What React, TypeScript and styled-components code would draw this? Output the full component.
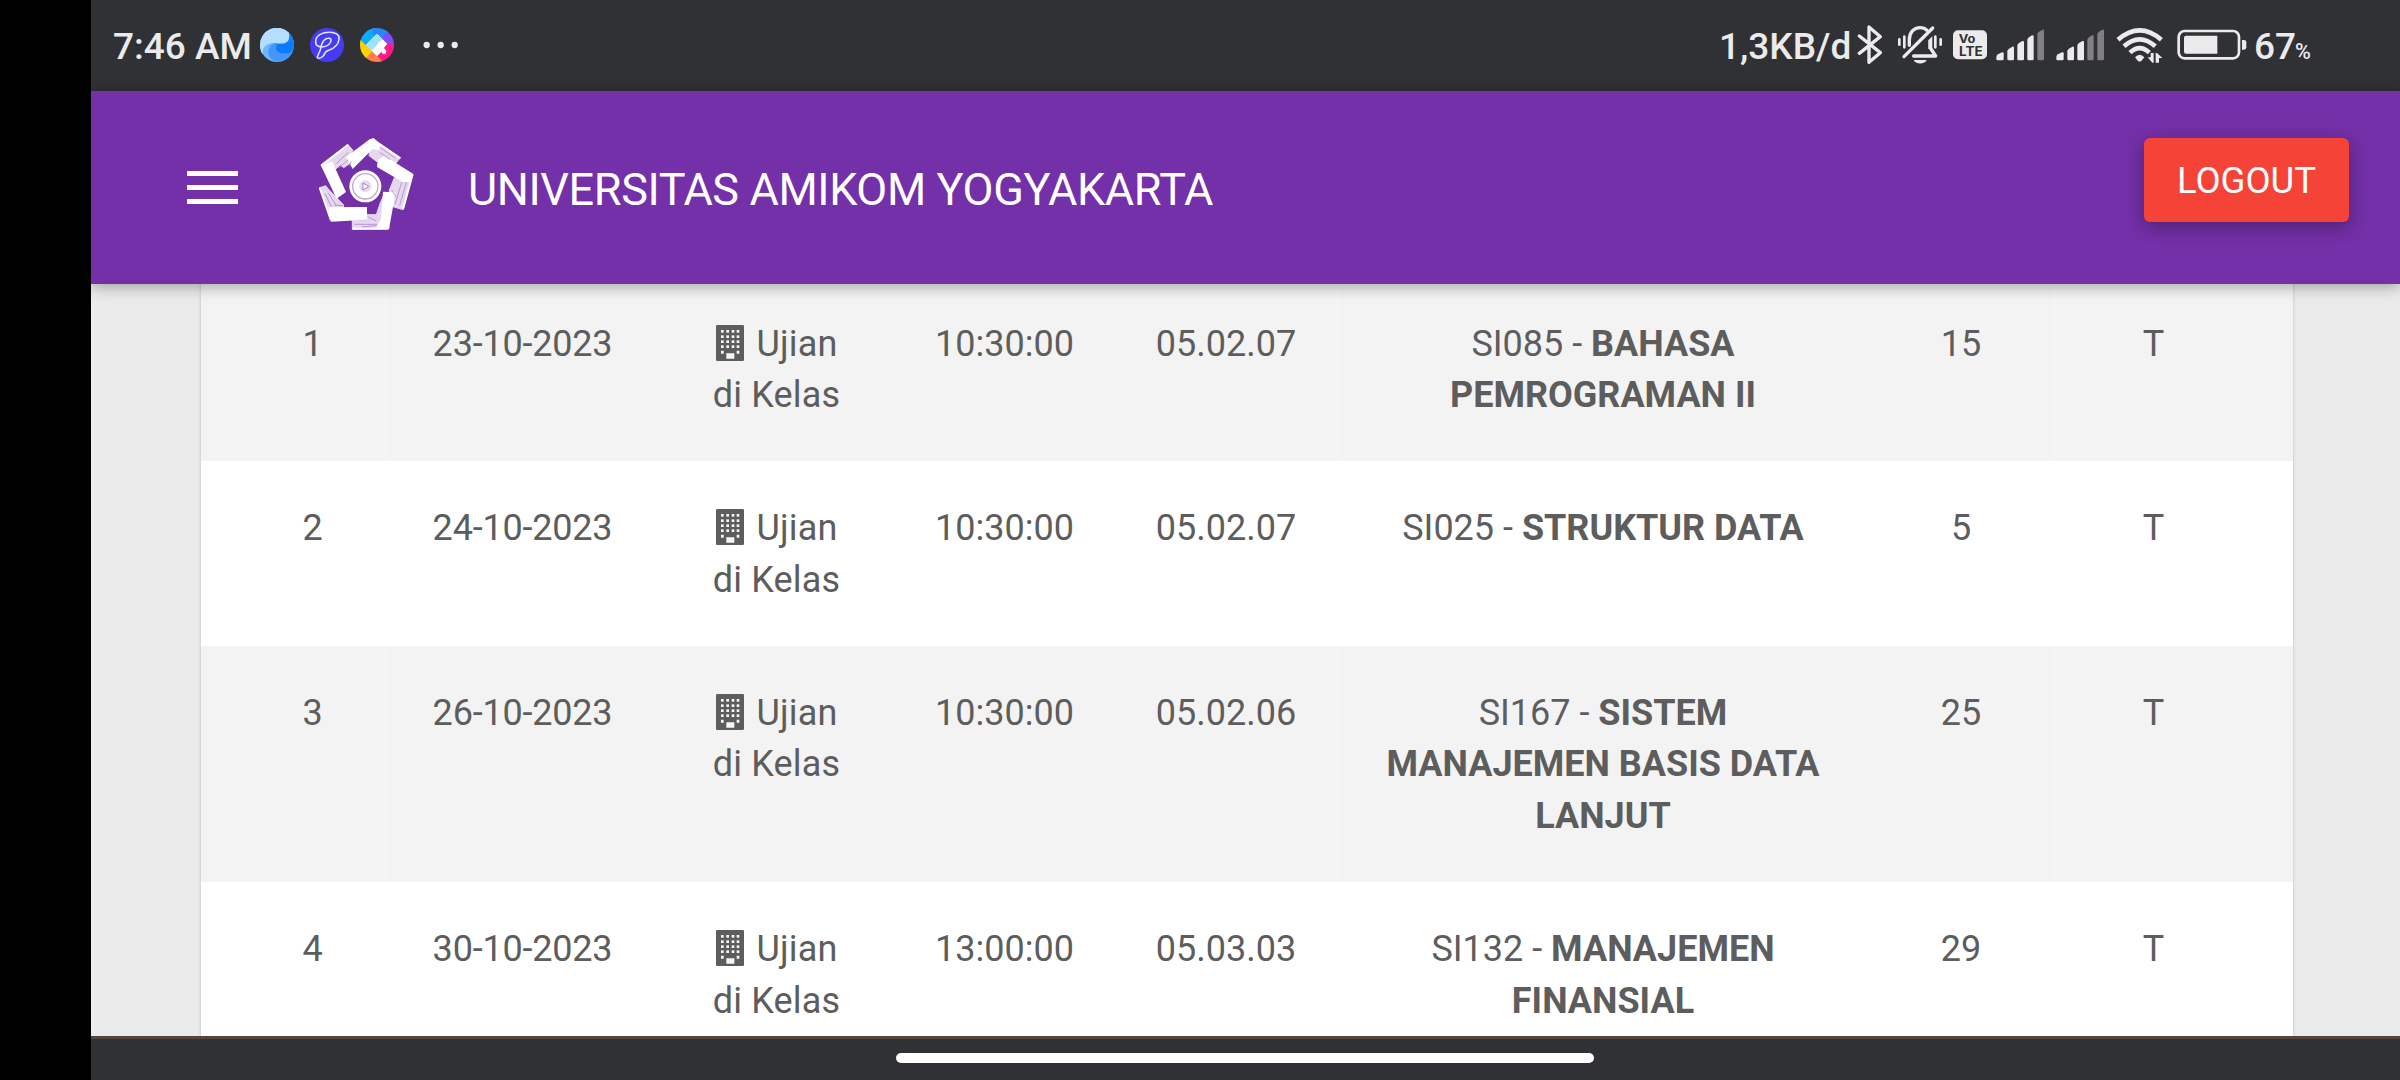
import React from "react";
import styled, { createGlobalStyle } from "styled-components";

const ink = "#ebebeb";
const muted = "#808082";
const purple = "#7430a8";

const GlobalStyle = createGlobalStyle`
  * { box-sizing: border-box; }
  body { margin: 0; background: #000; font-family: Roboto, "Liberation Sans", sans-serif; }
`;

const Screen = styled.div`
  display: flex;
  flex-direction: column;
  width: 2400px;
  height: 1080px;
  padding-left: 91px;
  background: #000;
  overflow: hidden;
`;

const StatusBar = styled.div`
  flex: none;
  display: flex;
  justify-content: space-between;
  height: 91px;
  padding: 0 88px 0 22px;
  background: #303135;
  color: ${ink};
`;

const StatusGroup = styled.div`
  display: flex;
  height: 90px;
  align-items: center;
`;

const StatusText = styled.span<{ $w: number; $ml?: number }>`
  width: ${(p) => p.$w}px;
  margin-left: ${(p) => p.$ml ?? 0}px;
  font-size: 37px;
  font-weight: 500;
  line-height: 44px;
  white-space: nowrap;
  margin-top: 3px;
`;

const Percent = styled.span`
  font-size: 21.5px;
  font-weight: 500;
  line-height: 24px;
  width: 16px;
  margin: 14px 1px 0 -1px;
`;

const Glyph = styled.svg<{ $ml?: number }>`
  flex: none;
  display: block;
  margin-left: ${(p) => p.$ml ?? 0}px;
`;

const AppBar = styled.header`
  flex: none;
  position: relative;
  z-index: 1;
  display: flex;
  align-items: flex-start;
  height: 193px;
  padding: 47px 51px 0 96px;
  background: ${purple};
  box-shadow: 0 3px 14px rgba(0, 0, 0, 0.32);
  color: #fff;
`;

const MenuButton = styled.div`
  display: flex;
  flex-direction: column;
  justify-content: space-between;
  width: 51px;
  height: 33px;
  margin-top: 33px;
`;

const MenuLine = styled.span`
  height: 5.4px;
  background: #fff;
`;

const Title = styled.h1`
  margin: 26px 0 0 54px;
  font-size: 45px;
  font-weight: 400;
  line-height: 52px;
  letter-spacing: -0.39px;
  white-space: nowrap;
`;

const LogoutButton = styled.button`
  margin-left: auto;
  width: 205px;
  height: 84px;
  padding: 0;
  border: 0;
  border-radius: 6px;
  background: #f54437;
  color: #fff;
  font-family: inherit;
  font-size: 36.5px;
  line-height: 85px;
  text-align: center;
  box-shadow: 0 6px 16px rgba(0, 0, 0, 0.2), 0 3px 24px rgba(0, 0, 0, 0.14);
`;

const Content = styled.main`
  flex: none;
  height: 752px;
  padding: 0 107px 0 110px;
  overflow: hidden;
  background: #ebebeb;
`;

const Card = styled.section`
  margin-top: -8px;
  height: 800px;
  background: #fff;
  box-shadow: 0 0 3px rgba(0, 0, 0, 0.2);
`;

const Row = styled.div<{ $shaded: boolean }>`
  display: grid;
  grid-template-columns: 185px 273px 235px 221px 223px 530px 187px 1fr;
  color: #5d5d5d;
  font-size: 36px;
  line-height: 51.3px;
  background: ${(p) => (p.$shaded ? "#f3f3f3" : "#fff")};
`;

const Cell = styled.div<{ $rule?: boolean; $pl?: number; $pr?: number; $ls?: number }>`
  padding: 42.6px ${(p) => p.$pr ?? 0}px 39.6px ${(p) => p.$pl ?? 0}px;
  border-right: ${(p) => (p.$rule ? "1px solid rgba(255, 255, 255, 0.4)" : "0")};
  letter-spacing: ${(p) => p.$ls ?? 0}px;
  text-align: center;
  white-space: nowrap;
`;

const Course = styled.strong`
  font-weight: 700;
`;

const Line = styled.div`
  display: flex;
  justify-content: center;
  gap: 11px;
`;

const Building = styled.svg`
  width: 30px;
  height: 38px;
  margin-top: 5px;
`;

const NavBar = styled.footer`
  flex: none;
  display: flex;
  justify-content: center;
  height: 44px;
  padding: 14px 1px 0 0;
  border-top: 3px solid #54463f;
  background: #303135;
`;

const HomePill = styled.div`
  width: 698px;
  height: 10px;
  border-radius: 5px;
  background: #fff;
`;

const BrowserIcon = () => (
  <Glyph width="34" height="34" viewBox="540 84 102 102">
    <circle cx="591" cy="135" r="51" fill="#6fb6ff" />
    <path d="M627 99a51 51 0 0 1-29 86c-22 1-38-19-32-36 5-16 19-22 25-19-3 12 0 29 14 29 17 0 29-12 29-31z" fill="#4496f8" />
    <path d="M627 98c10 10 15 22 15 37 0 14-7 24-18 25-17 2-36-1-36-17 0-7 3-12 3-12 12 2 31 1 36-14z" fill="#0b7cff" />
    <path d="M540 135a51 51 0 0 1 87-37c3 20-3 31-20 32-20 0-42-5-55 13-5 8-5 15-4 21-5-8-8-18-8-29z" fill="#b3deff" />
  </Glyph>
);

const ScribbleIcon = () => (
  <Glyph width="34" height="34" viewBox="690 84 102 102" $ml={16}>
    <circle cx="741" cy="135" r="51" fill="#463cf4" />
    <path
      d="M731 140c10 0 21-9 22-18 1-8-9-9-16-5-9 5-13 17-15 29-3 13-12 24-10 27 3 4 15 0 20-8 2-8 5-11 14-14 14-5 29-17 31-33 2-15-12-21-28-21-24 0-41 10-42 27-1 14 10 18 24 16"
      fill="none"
      stroke="#e8e4ff"
      strokeWidth="4.5"
      strokeLinecap="round"
    />
  </Glyph>
);

const PaintIcon = () => (
  <Glyph width="34" height="34" viewBox="840 84 102 102" $ml={16}>
    <defs>
      <clipPath id="paintClip">
        <circle cx="891" cy="135" r="51" />
      </clipPath>
    </defs>
    <g clipPath="url(#paintClip)">
      <path d="M840 84h51l-51 56z" fill="#10b2f8" />
      <path d="M840 120l51-50v32l-33 34z" fill="#08acfb" />
      <path d="M876 84h50v10l-28 30-20-22z" fill="#2a86fb" />
      <path d="M942 80v66l-16-5-24-24 32-34z" fill="#7c4dfb" />
      <path d="M942 135v51h-30l-24-20 38-38z" fill="#ff1b86" />
      <path d="M855 186l-5-8 26-26 34 34z" fill="#ff7e52" />
      <path d="M840 118l36 36-20 22-16-20z" fill="#ffcf0a" />
      <path d="M891 101l34 34-34 34-34-34z" fill="#fff" />
      <path d="M891 101l17 17-34 34-17-17z" fill="#9fe2ff" />
      <path d="M903 152l22-24v26l-8 18-14-4z" fill="#ff1b86" />
      <path d="M896 126l15-5 5 16-4 7 7 9-3 9-8-1-6-9-11 4-6-10z" fill="#fff" />
    </g>
  </Glyph>
);

const DotsIcon = () => (
  <Glyph width="36" height="10" viewBox="1030 120 108 30" $ml={29}>
    {[1041, 1083, 1125].map((x) => (
      <circle key={x} cx={x} cy="135" r="9.5" fill={ink} />
    ))}
  </Glyph>
);

const BluetoothIcon = () => (
  <Glyph width="26" height="40" viewBox="471 75 78 120">
    <path
      d="M478 108l63 50-34 29V81l34 29-63 50"
      fill="none"
      stroke={ink}
      strokeWidth="10"
      strokeLinecap="round"
      strokeLinejoin="round"
    />
  </Glyph>
);

const BellIcon = () => (
  <Glyph width="46" height="40" viewBox="591 78 138 120" $ml={14}>
    <g fill="none" stroke={ink} strokeLinecap="round">
      <path d="M628 139v-17c0-22 14-36 32-36 9 0 16 3 21 8" strokeWidth="10" />
      <path d="M612 173l86-86" strokeWidth="10" />
      <path d="M598 121v16M613 113v32M706 113v32M722 121v16" strokeWidth="8" />
      <path d="M641 171h66l-16-24v-20" strokeWidth="10" strokeLinejoin="round" />
    </g>
    <path d="M697 112v38h-12v-26z" fill={ink} />
    <path d="M641 183h39c-4 14-35 14-39 0z" fill={ink} />
  </Glyph>
);

const VolteIcon = () => (
  <Glyph width="34" height="30" viewBox="759 92 102 90" $ml={10}>
    <rect x="759" y="93" width="102" height="87" rx="15" fill={ink} />
    <g fill="#303135" fontFamily="Inter, sans-serif" fontWeight="700">
      <text x="776" y="132" fontSize="35" textLength="50" lengthAdjust="spacingAndGlyphs">
        Vo
      </text>
      <text x="777" y="169" fontSize="38" textLength="71" lengthAdjust="spacingAndGlyphs">
        LTE
      </text>
    </g>
  </Glyph>
);

const SignalIcon = ({ level, ml }: { level: number; ml: number }) => (
  <Glyph width="48" height="32" viewBox="48 89 144 96" $ml={ml}>
    {[0, 1, 2, 3, 4].map((i) => {
      const x = [49, 82, 112, 142, 172][i];
      const right = [71, 102, 132, 161, 192][i];
      const top = 158 - i * 17;
      return (
        <path
          key={i}
          d={`M${x + 4} 183Q${x} 183 ${x} 179V${top + 15}Q${x} ${top + 10} ${x + 5} ${top + 7}L${right - 5} ${top + 1}Q${right} ${top} ${right} ${top + 4}V179Q${right} 183 ${right - 4} 183Z`}
          fill={i < level ? ink : muted}
        />
      );
    })}
  </Glyph>
);

const WifiIcon = () => (
  <Glyph width="48" height="38" viewBox="408 80 144 114" $ml={12}>
    <g fill="none" stroke={ink} strokeWidth="14">
      <path d="M414 121q65-56 130 0" />
      <path d="M432 141q47-42 94 0" />
      <path d="M450 160q29-27 58 0" />
    </g>
    <path d="M465 174q14-16 28 0l-9 11q-5 3-10 0z" fill={ink} />
    <path d="M503 174h9v-13h9v29h-4zM527 190v-29h4l16 15h-10v14z" fill={ink} />
  </Glyph>
);

const BatteryIcon = () => (
  <Glyph width="70" height="32" viewBox="593 88 210 96" $ml={13}>
    <rect x="598" y="94" width="181" height="82" rx="18" fill="none" stroke={ink} strokeWidth="8" />
    <path d="M620 108h94v54h-94q-6 0-6-6v-42q0-6 6-6z" fill={ink} />
    <path d="M788 121h6q7 0 7 7v15q0 7-7 7h-6z" fill={ink} />
  </Glyph>
);

const CampusLogo = () => (
  <Glyph width="96" height="94" viewBox="19 17 288 282" $ml={80}>
    <g fill="#e4d7ee" stroke="#e4d7ee" strokeWidth="3" strokeLinejoin="round">
      <path d="M182 20l84 56-16 20-34-22-20 14-24-18 8-40z" />
      <path d="M30 100l80-62 14 16-14 22 4 18-18 12-10-8-16 14 14 40z" />
      <path d="M24 166l18-6 8 10 46 48-2 12-36 6 2 28z" />
      <path d="M122 290v-25h42v-18h30l12-36 14-30 12 108z" />
      <path d="M302 128l-28 104-34-10 8-28-16-18 16-40z" />
    </g>
    <g fill="#fff">
      <path d="M103 74l72-54 12-2 20 20-6 16-18-4-60 60z" />
      <path d="M28 100l33-13 42 92-28 20z" />
      <path d="M50 224h116v38l-108 6z" />
      <path d="M214 178l38 2-20 110-38-6 14-24z" />
      <path d="M198 84l20-14 86 54-6 26-26-2-76-44z" />
    </g>
    <g fill="none" stroke="#fff" strokeWidth="6" strokeLinejoin="round">
      <path d="M182 20l84 58M28 100l82-63M24 166l34 98M122 289h108M303 126l-29 105" />
    </g>
    <g fill="none" stroke="#b08ad0" strokeWidth="2.5">
      <path d="M206 46l46 32M204 60l32 22M74 94l36-34M82 106l28-24M40 184l20 40M50 182l24 38M68 218l26 2M128 276h68M150 284l44-4M170 254l24 12M284 150l-20 70M270 150l-20 66M118 88l-4 14M240 174l14 20" />
    </g>
    <circle cx="161" cy="162" r="48" fill="#fff" />
    <circle cx="161" cy="162" r="38" fill="none" stroke="#c3a5dc" strokeWidth="4" />
    <circle cx="161" cy="162" r="18" fill="#e6d9f0" />
    <path d="M154 152l17 10-17 11z" fill="#fff" stroke="#a77acb" strokeWidth="3" />
  </Glyph>
);

const BuildingIcon = () => (
  <Building viewBox="0 0 90 114">
    <rect x="3" y="3" width="84" height="108" rx="4" fill="#5d5d5d" />
    {[18, 34, 49, 64].map((y) =>
      [18, 34, 50, 65].map((x) => <rect key={`${x}-${y}`} x={x} y={y} width="8" height="8" fill="#f6f6f6" />)
    )}
    <path d="M18 80h8v9h-8zM65 80h8v9h-8zM34 88h24v16H34z" fill="#f6f6f6" />
  </Building>
);

interface Exam {
  no: number;
  date: string;
  time: string;
  room: string;
  code: string;
  course: string[];
  seat: number;
}

const exams: Exam[] = [
  { no: 1, date: "23-10-2023", time: "10:30:00", room: "05.02.07", code: "SI085", course: ["BAHASA", "PEMROGRAMAN II"], seat: 15 },
  { no: 2, date: "24-10-2023", time: "10:30:00", room: "05.02.07", code: "SI025", course: ["STRUKTUR DATA"], seat: 5 },
  { no: 3, date: "26-10-2023", time: "10:30:00", room: "05.02.06", code: "SI167", course: ["SISTEM", "MANAJEMEN BASIS DATA", "LANJUT"], seat: 25 },
  { no: 4, date: "30-10-2023", time: "13:00:00", room: "05.03.03", code: "SI132", course: ["MANAJEMEN", "FINANSIAL"], seat: 29 },
];

const ExamRow = ({ exam }: { exam: Exam }) => (
  <Row $shaded={exam.no % 2 === 1}>
    <Cell $rule $pl={39}>{exam.no}</Cell>
    <Cell $ls={-0.2}>{exam.date}</Cell>
    <Cell $ls={0.2}>
      <Line>
        <BuildingIcon />
        Ujian
      </Line>
      <div>di Kelas</div>
    </Cell>
    <Cell>{exam.time}</Cell>
    <Cell $rule>{exam.room}</Cell>
    <Cell>
      {exam.course.map((part, i) => (
        <div key={part}>
          {i === 0 && `${exam.code} - `}
          <Course>{part}</Course>
        </div>
      ))}
    </Cell>
    <Cell $rule>{exam.seat}</Cell>
    <Cell $pr={41}>T</Cell>
  </Row>
);

export default function App() {
  return (
    <>
      <GlobalStyle />
      <Screen>
        <StatusBar>
          <StatusGroup>
            <StatusText $w={147}>7:46 AM</StatusText>
            <BrowserIcon />
            <ScribbleIcon />
            <PaintIcon />
            <DotsIcon />
          </StatusGroup>
          <StatusGroup>
            <StatusText $w={138}>1,3KB/d</StatusText>
            <BluetoothIcon />
            <BellIcon />
            <VolteIcon />
            <SignalIcon level={4} ml={9} />
            <SignalIcon level={3} ml={12} />
            <WifiIcon />
            <BatteryIcon />
            <StatusText $w={42} $ml={7}>67</StatusText>
            <Percent>%</Percent>
          </StatusGroup>
        </StatusBar>
        <AppBar>
          <MenuButton>
            <MenuLine />
            <MenuLine />
            <MenuLine />
          </MenuButton>
          <CampusLogo />
          <Title>UNIVERSITAS AMIKOM YOGYAKARTA</Title>
          <LogoutButton>LOGOUT</LogoutButton>
        </AppBar>
        <Content>
          <Card>
            {exams.map((exam) => (
              <ExamRow key={exam.no} exam={exam} />
            ))}
          </Card>
        </Content>
        <NavBar>
          <HomePill />
        </NavBar>
      </Screen>
    </>
  );
}
